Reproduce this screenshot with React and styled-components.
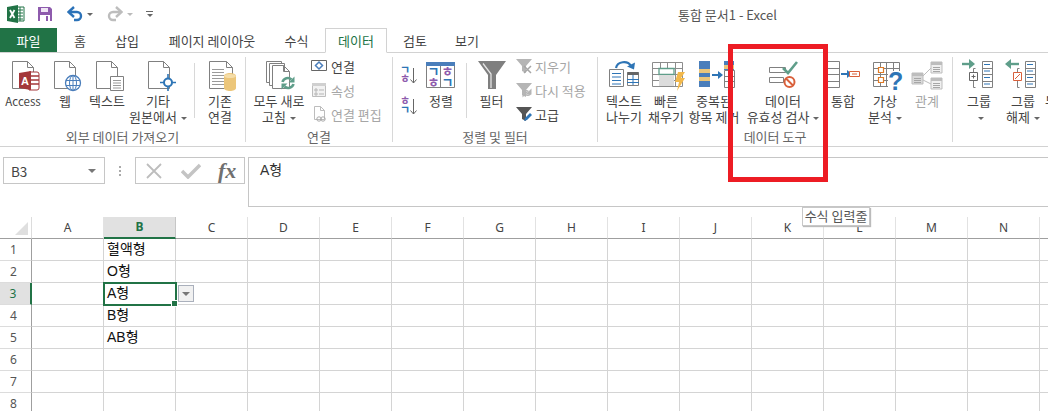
import styled, { createGlobalStyle } from "styled-components";

const GlobalStyle = createGlobalStyle`
    html, body {
        margin: 0;
        padding: 0;
        background: #fff;
        overflow: hidden;
    }
    body {
        font-family: "Noto Sans CJK KR", "Noto Sans", sans-serif;
    }
`;

const Page = styled.div`
    position: relative;
    width: 1048px;
    height: 411px;
    overflow: hidden;
    background: #fff;
    color: #444;
`;

/* title row */
const TitleBar = styled.div`
    height: 28px;
    display: flex;
    align-items: center;
`;
const QuickAccess = styled.div`
    width: 678px;
    display: flex;
    align-items: center;
    padding-left: 7px;
    box-sizing: border-box;
`;
const QuickGap = styled.span`
    width: ${(p) => p.$w}px;
`;
const Title = styled.div`
    font-size: 13px;
    color: #555;
    white-space: nowrap;
`;

/* tabs */
const TabRow = styled.div`
    height: 25px;
    display: flex;
    border-bottom: 1px solid #d2d2d2;
    box-sizing: border-box;
`;
const FileTab = styled.div`
    width: 57px;
    background: #217346;
    color: #fff;
    font-size: 13px;
    display: flex;
    align-items: center;
    justify-content: center;
`;
const Tab = styled.div`
    width: ${(p) => p.$w}px;
    margin-left: ${(p) => p.$ml || 0}px;
    font-size: 13px;
    display: flex;
    align-items: center;
    justify-content: center;
    box-sizing: border-box;
    white-space: nowrap;
    color: ${(p) => (p.$active ? "#217346" : "#444")};
    ${(p) =>
        p.$active &&
        `border: 1px solid #d2d2d2; border-bottom: 1px solid #fff; height: 25px; background: #fff;`}
`;

/* ribbon */
const Ribbon = styled.div`
    height: 94px;
    display: flex;
    border-bottom: 1px solid #d2d2d2;
    box-sizing: border-box;
    overflow: hidden;
`;
const Group = styled.div`
    width: ${(p) => p.$w}px;
    flex-shrink: 0;
    height: 85px;
    margin-top: 4px;
    display: flex;
    flex-direction: column;
    box-sizing: border-box;
    border-right: ${(p) => (p.$last ? "none" : "1px solid #d8d8d8")};
`;
const GroupBody = styled.div`
    height: 72px;
    flex-shrink: 0;
    display: flex;
    padding-left: ${(p) => p.$pl || 0}px;
`;
const GroupLabel = styled.div`
    height: 16px;
    flex-shrink: 0;
    font-size: 13px;
    line-height: 16px;
    color: #666;
    text-align: center;
    white-space: nowrap;
`;
const BigButton = styled.div`
    width: ${(p) => p.$w}px;
    flex-shrink: 0;
    display: flex;
    flex-direction: column;
    align-items: center;
    padding-top: 2px;
    font-size: 13px;
    line-height: 16px;
    white-space: nowrap;
    color: ${(p) => (p.$off ? "#a6a6a6" : "#444")};
`;
const BigIcon = styled.svg`
    width: 40px;
    height: 32px;
    margin-bottom: 2px;
    flex-shrink: 0;
    overflow: visible;
`;
const LatinLabel = styled.span`
    font-size: 11.5px;
`;
const Caret = styled.span`
    display: inline-block;
    width: 0;
    height: 0;
    margin-left: 4px;
    vertical-align: middle;
    border-left: 3px solid transparent;
    border-right: 3px solid transparent;
    border-top: 3px solid ${(p) => p.$color || "#666"};
`;
const CustomizeMark = styled.div`
    width: 7px;
    display: flex;
    flex-direction: column;
    align-items: center;
    padding-top: 2px;
    border-top: 1px solid #666;
`;
const Divider = styled.div`
    width: 1px;
    height: 55px;
    margin: 6px ${(p) => p.$mr || 0}px 0 ${(p) => p.$ml || 0}px;
    background: #d8d8d8;
    flex-shrink: 0;
`;
const SmallColumn = styled.div`
    display: flex;
    flex-direction: column;
    width: ${(p) => p.$w}px;
    flex-shrink: 0;
    margin-top: -3px;
    margin-left: ${(p) => p.$ml || 0}px;
`;
const SmallButton = styled.div`
    height: 24px;
    display: flex;
    align-items: center;
    gap: ${(p) => p.$gap ?? 4}px;
    font-size: 13px;
    white-space: nowrap;
    color: ${(p) => (p.$off ? "#a6a6a6" : "#444")};
`;
const SortColumn = styled.div`
    width: ${(p) => p.$w}px;
    flex-shrink: 0;
    display: flex;
    flex-direction: column;
    gap: 13px;
    padding: 9px 0 0 8px;
    box-sizing: border-box;
`;
const SortIcon = styled.svg`
    width: 16px;
    height: 18px;
    overflow: visible;
    flex-shrink: 0;
`;

/* formula bar */
const FormulaBar = styled.div`
    height: 50px;
    margin-top: 10px;
    display: flex;
    align-items: flex-start;
`;
const NameBox = styled.div`
    width: 102px;
    height: 27px;
    margin-left: 3px;
    border: 1px solid #c6c6c6;
    box-sizing: border-box;
    display: flex;
    align-items: center;
    justify-content: space-between;
    padding: 0 8px 0 7px;
    font-size: 13.5px;
    color: #444;
`;
const NameArrow = styled(Caret)`
    border-left-width: 4px;
    border-right-width: 4px;
    border-top-width: 4px;
    border-top-color: #777;
`;
const Grip = styled.div`
    width: 2px;
    height: 10px;
    margin: 9px 14px 0 14px;
    background: repeating-linear-gradient(#aaa 0 2px, transparent 2px 4px);
`;
const FormulaButtons = styled.div`
    width: 110px;
    height: 27px;
    border: 1px solid #c6c6c6;
    box-sizing: border-box;
    display: flex;
    align-items: center;
    padding-left: 9px;
    gap: 18px;
`;
const FormulaInput = styled.div`
    flex: 1;
    height: 50px;
    margin-left: 3px;
    margin-right: -2px;
    border: 1px solid #c6c6c6;
    box-sizing: border-box;
    padding: 1px 0 0 11px;
    font-family: "Liberation Sans", "Noto Sans CJK KR", sans-serif;
    font-size: 14px;
    line-height: 22px;
    color: #333;
`;
const FxText = styled.span`
    font-family: "Liberation Serif", serif;
    font-style: italic;
    font-weight: bold;
    font-size: 22px;
    line-height: 25px;
    color: #707070;
    margin-left: -1px;
`;

/* sheet */
const Sheet = styled.div`
    margin-top: 10px;
    display: grid;
    grid-template-columns: 32px repeat(15, 72px);
    grid-template-rows: 22px repeat(8, 22px);
`;
const Corner = styled.div`
    position: relative;
    border-right: 1px solid #dcdcdc;
    border-bottom: 1px solid #9f9f9f;
    box-sizing: border-box;
    &::after {
        content: "";
        position: absolute;
        left: 15px;
        bottom: 3px;
        width: 0;
        height: 0;
        border-left: 13px solid transparent;
        border-bottom: 13px solid #dfdfdf;
    }
`;
const ColHeader = styled.div`
    box-sizing: border-box;
    display: flex;
    align-items: center;
    justify-content: center;
    padding-bottom: 1px;
    font-family: "Noto Sans", sans-serif;
    font-size: 12px;
    color: ${(p) => (p.$on ? "#217346" : "#444")};
    font-weight: ${(p) => (p.$on ? 700 : 400)};
    background: ${(p) => (p.$on ? "#e1e1e1" : "#fff")};
    border-right: 1px solid ${(p) => (p.$on ? "#c6c6c6" : "#e2e2e2")};
    border-bottom: ${(p) => (p.$on ? "2px solid #217346" : "1px solid #9f9f9f")};
`;
const RowHeader = styled.div`
    box-sizing: border-box;
    display: flex;
    align-items: center;
    justify-content: center;
    padding-right: 4px;
    font-family: "Noto Sans", sans-serif;
    font-size: 12px;
    color: ${(p) => (p.$on ? "#217346" : "#555")};
    background: ${(p) => (p.$on ? "#e1e1e1" : "#fff")};
    border-right: ${(p) => (p.$on ? "2px solid #217346" : "1px solid #9f9f9f")};
    border-bottom: 1px solid #dcdcdc;
`;
const Cell = styled.div`
    position: relative;
    box-sizing: border-box;
    border-right: 1px solid #d4d4d4;
    border-bottom: 1px solid #d4d4d4;
    padding-left: 3px;
    font-family: "Liberation Sans", "Noto Sans CJK KR", sans-serif;
    font-size: 14px;
    line-height: 21px;
    color: #111;
    white-space: nowrap;
    ${(p) =>
        p.$selected &&
        `outline: 2px solid #217346; outline-offset: -1px; z-index: 2;`}
`;
const FillHandle = styled.div`
    position: absolute;
    right: -3px;
    bottom: -3px;
    width: 5px;
    height: 5px;
    background: #217346;
    border: 1px solid #fff;
`;
const ListButton = styled.div`
    position: absolute;
    left: 74px;
    top: 2px;
    width: 16px;
    height: 17px;
    box-sizing: border-box;
    background: #f1f1f1;
    border: 1px solid #aab0bc;
    display: flex;
    align-items: center;
    justify-content: center;
`;

/* overlays */
const Highlight = styled.div`
    position: absolute;
    left: 728px;
    top: 44px;
    width: 100px;
    height: 138px;
    box-sizing: border-box;
    border: 5px solid #ed1c24;
    pointer-events: none;
`;
const Tooltip = styled.div`
    position: absolute;
    left: 802px;
    top: 207px;
    width: 68px;
    height: 19px;
    box-sizing: border-box;
    background: #fff;
    border: 1px solid #c8c8c8;
    box-shadow: 1px 1px 1px #bbb;
    font-size: 13px;
    line-height: 16px;
    text-align: center;
    color: #555;
    white-space: nowrap;
    z-index: 5;
`;

const G = "#808080";
const BLUE = "#4a7ebb";
const TEAL = "#5f9e8a";

const pagePath = (x, y, w, h, f = 6) =>
    `M${x} ${y}H${x + w - f}L${x + w} ${y + f}V${y + h}H${x}ZM${x + w - f} ${y}V${y + f}H${x + w}`;

const Page1 = ({ x = 9, y = 2, w = 21, h = 27 }) => (
    <path d={pagePath(x + 0.5, y + 0.5, w, h)} fill="#fff" stroke={G} />
);

const Lines = ({ x, y, w, n, gap = 3, color = "#9a9a9a" }) => (
    <path
        d={Array.from({ length: n }, (_, i) => `M${x} ${y + i * gap + 0.5}h${w}`).join("")}
        stroke={color}
        fill="none"
    />
);

const TableGrid = ({ x, y, w, h, cols, rows, color = G }) => {
    let d = `M${x + 0.5} ${y + 0.5}h${w}v${h}h${-w}z`;
    for (let i = 1; i < cols; i++) d += `M${x + 0.5 + Math.round((w * i) / cols)} ${y}v${h}`;
    for (let i = 1; i < rows; i++) d += `M${x} ${y + 0.5 + Math.round((h * i) / rows)}h${w}`;
    return <path d={d} fill="none" stroke={color} />;
};

const Refresh = ({ cx, cy, r = 6, color = TEAL, sw = 2.6 }) => (
    <g fill="none" stroke={color} strokeWidth={sw}>
        <path d={`M${cx - r} ${cy - 1}A${r} ${r} 0 0 1 ${cx + r - 2} ${cy - r + 2}`} />
        <path d={`M${cx + r} ${cy + 1}A${r} ${r} 0 0 1 ${cx - r + 2} ${cy + r - 2}`} />
        <path d={`M${cx + r + 1} ${cy - r - 1}v6h-6z`} fill={color} stroke="none" />
        <path d={`M${cx - r - 1} ${cy + r + 1}v-6h6z`} fill={color} stroke="none" />
    </g>
);

const Funnel = ({ color, x = 0 }) => (
    <path d={`M${x} 1H${x + 16}L${x + 10} 8V15L${x + 6} 13V8Z`} fill={color} />
);

const SmallSvg = styled.svg`
    width: ${(p) => p.$w || 16}px;
    height: ${(p) => p.$h || 16}px;
    flex-shrink: 0;
`;

const ExcelLogo = () => (
    <SmallSvg $w={18} $h={18} viewBox="0 0 18 18">
        <path d="M9 2h8v14H9z" fill="#fff" stroke="#217346" />
        <path d="M10 5h6M10 8h6M10 11h6M10 14h6M13 2v14" stroke="#217346" />
        <path d="M0 2L11 0V18L0 16Z" fill="#217346" />
        <path d="M3 5l4.500 8M7.500 5L3 13" stroke="#fff" strokeWidth="1.800" />
    </SmallSvg>
);
const SaveIcon = () => (
    <SmallSvg viewBox="0 0 16 16">
        <path d="M1 1h12l2 2v12H1z" fill="#8e5bad" />
        <path d="M4 2h7v4H4z" fill="#efe6f4" />
        <path d="M3 9h10v6H3z" fill="#fff" />
        <path d="M9 10h2v5H9z" fill="#8e5bad" />
    </SmallSvg>
);
const UndoArrow = ({ color, flip }) => (
    <SmallSvg viewBox="0 0 16 16" style={flip ? { transform: "scaleX(-1)" } : undefined}>
        <path d="M3 6h7a4 4 0 0 1 0 8H7" fill="none" stroke={color} strokeWidth="2.400" />
        <path d="M7 1L1.500 6 7 11" fill="none" stroke={color} strokeWidth="2.400" />
    </SmallSvg>
);

const Icons = {
    access: (
        <>
            <Page1 />
            <path d="M26 13h8a2 2 0 0 1 2 2v14a2 2 0 0 1-2 2h-8z" fill="#fff" stroke="#a4373a" />
            <path d="M27 17h9M27 21h9M27 25h9" stroke="#a4373a" strokeWidth="1.500" />
            <path d="M16 14l12-2v19l-12-2z" fill="#a4373a" />
            <text x="18" y="26" fontSize="11" fontWeight="700" fill="#fff" fontFamily="Liberation Sans">A</text>
        </>
    ),
    web: (
        <>
            <Page1 />
            <circle cx="28" cy="24" r="7.500" fill="#fff" stroke={BLUE} strokeWidth="1.300" />
            <ellipse cx="28" cy="24" rx="3.500" ry="7.500" fill="none" stroke={BLUE} />
            <path d="M21 21.500h14M21 26.500h14M28 16.500v15" stroke={BLUE} />
        </>
    ),
    text: (
        <>
            <Page1 />
            <path d="M23.500 17.500h13v14h-13z" fill="#fff" stroke={G} />
            <Lines x={26} y={21} w={8} n={4} gap={2.500} />
        </>
    ),
    other: (
        <>
            <Page1 x={10} />
            <path d="M22 23.500h16M30 15v17" stroke="#2e75b6" strokeWidth="1.600" />
            <circle cx="30" cy="23.500" r="4" fill="#fff" stroke="#2e75b6" strokeWidth="2" />
        </>
    ),
    existing: (
        <>
            <Page1 w={23} />
            <Lines x={12} y={10} w={12} n={6} gap={3} />
            <path d="M24 17c0-4 12-4 12 0v12c0 4-12 4-12 0z" fill="#ecc67a" />
            <ellipse cx="30" cy="17" rx="6" ry="2" fill="#f5dda8" />
        </>
    ),
    refreshAll: (
        <>
            <path d="M7.500 2.500h15v21h-15z" fill="#fff" stroke={G} />
            <path d="M10.500 4.500h15v22h-15z" fill="#fff" stroke={G} />
            <path d={pagePath(13.5, 6.5, 17, 23)} fill="#fff" stroke={G} />
            <Refresh cx={29} cy={24} r={5.500} />
        </>
    ),
    sort: (
        <>
            <path d="M5.500 3.500h28v25h-28z" fill="#fff" stroke={G} />
            <path d="M5 3h29v4H5z" fill="#4a7ebb" />
            <path d="M19.500 7v21" stroke={G} />
            <text x="6.500" y="17" fontSize="13" fontWeight="700" fill="#2e75b6">ㄱ</text>
            <text x="6.500" y="28" fontSize="13" fontWeight="700" fill="#8e5bad">ㅎ</text>
            <text x="20.500" y="17" fontSize="13" fontWeight="700" fill="#8e5bad">ㅎ</text>
            <text x="20.500" y="28" fontSize="13" fontWeight="700" fill="#2e75b6">ㄱ</text>
        </>
    ),
    filter: (
        <>
            <path d="M6 2H34L24 16V30H16V16Z" fill="#7f7f7f" />
            <path d="M11 4.500L19 15V29" fill="none" stroke="#e4e4e4" strokeWidth="1.300" />
        </>
    ),
    split: (
        <>
            <path d="M5.500 10.500h14v17h-14z" fill="#fff" stroke={G} />
            <Lines x={8} y={14} w={9} n={4} gap={3.500} color="#2e75b6" />
            <path d="M23.500 13.500h11v13h-11z" fill="#fff" stroke={G} />
            <path d="M23.500 13h11v3h-11z" fill="#666" />
            <path d="M23 20.500h12M23 23.500h12M29 16v10" stroke="#2e75b6" />
            <path d="M12 9a8 7 0 0 1 15-2" fill="none" stroke="#2e75b6" strokeWidth="2.200" />
            <path d="M23 7.500l7 3 1-7z" fill="#2e75b6" />
        </>
    ),
    flash: (
        <>
            <TableGrid x={6} y={3} w={30} h={24} cols={4} rows={4} color="#8c8c8c" />
            <path d="M13 9.500h15v6h-15z" fill="#fff" stroke="#5f9e8a" strokeWidth="1.300" />
            <path d="M13 16h15v11H13z" fill="#dcdcdc" />
            <path d="M32 13h7l-4 6h4l-8 13 2-9h-4z" fill="#f2b84b" />
        </>
    ),
    dedupe: (
        <>
            <path d="M5 2h11v26H5z" fill="#4a7ebb" />
            <path d="M5 10h11v4H5zM5 18h11v4H5z" fill="#ecc67a" />
            <path d="M18 16h7" stroke="#2e75b6" strokeWidth="2" />
            <path d="M24 12l5 4-5 4z" fill="#2e75b6" />
            <path d="M30 2h10v9H30z" fill="#4a7ebb" />
            <path d="M30 6h10v4H30z" fill="#ecc67a" />
            <TableGrid x={30} y={11} w={10} h={17} cols={1} rows={3} />
        </>
    ),
    validate: (
        <>
            <path d="M6.500 8.500h16v5h-16zM6.500 18.500h14v5h-14z" fill="#fff" stroke={G} />
            <path d="M20 9l5 5 9-11" fill="none" stroke={TEAL} strokeWidth="2.600" />
            <circle cx="26.500" cy="23" r="5" fill="#fff" stroke="#d9603b" strokeWidth="2" />
            <path d="M23 19.500l7 7" stroke="#d9603b" strokeWidth="2" />
        </>
    ),
    merge: (
        <>
            <TableGrid x={0} y={2} w={16} h={26} cols={1} rows={4} />
            <path d="M18 15h7" stroke="#2e75b6" strokeWidth="2" />
            <path d="M24 11l5 4-5 4z" fill="#2e75b6" />
            <path d="M26.500 12.500h10v5h-10z" fill="#fff" stroke="#d9603b" />
            <path d="M29 15h5" stroke="#d9603b" />
        </>
    ),
    whatif: (
        <>
            <TableGrid x={8} y={3} w={26} h={24} cols={4} rows={4} />
            <path d="M13.500 8.500h5v5h-5zM13.500 18.500h5v5h-5z" fill="#fff" stroke="#e07b26" strokeWidth="1.200" />
            <path d="M23 12h13v19H23z" fill="#fff" />
            <text x="23" y="31" fontSize="25" fontWeight="700" fill="#2e75b6" fontFamily="Liberation Sans">?</text>
        </>
    ),
    relation: (
        <>
            <path d="M5 14h11v11H5z" fill="#d9d9d9" stroke="#bdbdbd" />
            <path d="M24 3h11v11H24zM24 19h11v11H24z" fill="#f0f0f0" stroke="#bdbdbd" />
            <path d="M5 14h11v3H5zM24 3h11v3H24zM24 19h11v3H24z" fill="#bdbdbd" />
            <path d="M16 17L24 9M16 21L24 25" stroke="#bdbdbd" fill="none" />
            <Lines x={7} y={19} w={7} n={3} gap={2} color="#a6a6a6" />
            <Lines x={26} y={8} w={7} n={3} gap={2} color="#a6a6a6" />
            <Lines x={26} y={24} w={7} n={3} gap={2} color="#a6a6a6" />
        </>
    ),
    group: (
        <>
            <path d="M3 5h9" stroke={TEAL} strokeWidth="2.400" />
            <path d="M10 0l6 5-6 5z" fill={TEAL} />
            <path d="M16.500 9.500h-2v19h2" fill="none" stroke={G} />
            <path d="M10.500 13.500h8v8h-8z" fill="#fff" stroke="#666" />
            <path d="M12.500 17.500h4M14.500 15.500v4" stroke="#666" />
            <TableGrid x={23} y={2} w={10} h={26} cols={1} rows={4} />
            <Lines x={25} y={5} w={6} n={4} gap={6.500} color="#2e75b6" />
        </>
    ),
    ungroup: (
        <>
            <path d="M7 5h9" stroke={TEAL} strokeWidth="2.400" />
            <path d="M8 0L2 5l6 5z" fill={TEAL} />
            <path d="M16.500 9.500h-2v19h2" fill="none" stroke={G} />
            <path d="M10.500 13.500h8v8h-8z" fill="#fff" stroke="#d9603b" />
            <path d="M12 20l5-5" stroke="#d9603b" />
            <TableGrid x={22} y={2} w={10} h={26} cols={1} rows={4} />
            <Lines x={24} y={5} w={6} n={4} gap={6.500} color="#2e75b6" />
        </>
    ),
};

const Big = ({ w, icon, lines, off, caret }) => (
    <BigButton $w={w} $off={off}>
        <BigIcon viewBox="0 0 40 32">{Icons[icon]}</BigIcon>
        {lines.map((line, i) => (
            <div key={i}>
                {line}
                {caret && i === lines.length - 1 && <Caret />}
            </div>
        ))}
    </BigButton>
);

const SortGlyphs = ({ top, bottom, topColor, bottomColor }) => (
    <SortIcon viewBox="0 0 16 18">
        <text x="-1" y="8" fontSize="11" fontWeight="700" fill={topColor}>{top}</text>
        <text x="-1" y="17" fontSize="11" fontWeight="700" fill={bottomColor}>{bottom}</text>
        <path d="M12.500 2v15M9.500 13.500l3 3.500 3-3.500" fill="none" stroke="#666" />
    </SortIcon>
);

const tabs = [
    ["홈", 46],
    ["삽입", 48],
    ["페이지 레이아웃", 122],
    ["수식", 47],
];

const columns = "ABCDEFGHIJKLMNO".split("");
const cellText = { 1: "혈액형", 2: "O형", 3: "A형", 4: "B형", 5: "AB형" };

const Row = ({ row }) => (
    <>
        <RowHeader $on={row === 3}>{row}</RowHeader>
        {columns.map((c) => {
            const isB = c === "B";
            const selected = isB && row === 3;
            return (
                <Cell key={c} $selected={selected}>
                    {isB && cellText[row]}
                    {selected && (
                        <>
                            <FillHandle />
                            <ListButton>
                                <NameArrow style={{ margin: 0 }} />
                            </ListButton>
                        </>
                    )}
                </Cell>
            );
        })}
    </>
);

const App = () => {
    return (
        <Page>
            <GlobalStyle />
            <TitleBar>
                <QuickAccess>
                    <ExcelLogo />
                    <QuickGap $w={12} />
                    <SaveIcon />
                    <QuickGap $w={14} />
                    <UndoArrow color="#2b72b8" />
                    <Caret />
                    <QuickGap $w={14} />
                    <UndoArrow color="#bdbdbd" flip />
                    <Caret $color="#bbb" />
                    <QuickGap $w={13} />
                    <CustomizeMark>
                        <Caret style={{ margin: 0 }} />
                    </CustomizeMark>
                </QuickAccess>
                <Title>통합 문서1 - Excel</Title>
            </TitleBar>

            <TabRow>
                <FileTab>파일</FileTab>
                {tabs.map(([name, w]) => (
                    <Tab key={name} $w={w}>{name}</Tab>
                ))}
                <Tab $w={62} $ml={5} $active>데이터</Tab>
                <Tab $w={56}>검토</Tab>
                <Tab $w={48}>보기</Tab>
            </TabRow>

            <Ribbon>
                <Group $w={246}>
                    <GroupBody>
                        <Big w={46} icon="access" lines={[<LatinLabel key="a">Access</LatinLabel>]} />
                        <Big w={38} icon="web" lines={["웹"]} />
                        <Big w={46} icon="text" lines={["텍스트"]} />
                        <Big w={56} icon="other" lines={["기타", "원본에서"]} caret />
                        <Divider $ml={8} />
                        <Big w={50} icon="existing" lines={["기존", "연결"]} />
                    </GroupBody>
                    <GroupLabel>외부 데이터 가져오기</GroupLabel>
                </Group>

                <Group $w={147}>
                    <GroupBody>
                        <Big w={66} icon="refreshAll" lines={["모두 새로", "고침"]} caret />
                        <SmallColumn $w={80} $ml={-1}>
                            <SmallButton>
                                <SmallSvg viewBox="0 0 16 16">
                                    <path d="M0.500 2.500h15v10h-15z" fill="#fff" stroke="#666" />
                                    <path d="M8 4l3.500 3.500L8 11 4.500 7.500z" fill="none" stroke={BLUE} strokeWidth="1.500" />
                                </SmallSvg>
                                연결
                            </SmallButton>
                            <SmallButton $off>
                                <SmallSvg viewBox="0 0 16 16">
                                    <path d="M1.500 1.500h13v13h-13z" fill="#f2f2f2" stroke="#bdbdbd" />
                                    <path d="M1 1h14v3H1z" fill="#d0d0d0" />
                                    <path d="M4 7h2v2H4zM4 11h2v2H4zM8 8h5M8 12h5" stroke="#b5b5b5" fill="none" />
                                </SmallSvg>
                                속성
                            </SmallButton>
                            <SmallButton $off>
                                <SmallSvg viewBox="0 0 16 16">
                                    <path d={pagePath(3.5, 0.5, 10, 13, 4)} fill="#fff" stroke="#bdbdbd" />
                                    <circle cx="8" cy="13" r="2.200" fill="none" stroke="#aaa" />
                                    <circle cx="12" cy="13" r="2.200" fill="none" stroke="#aaa" />
                                </SmallSvg>
                                연결 편집
                            </SmallButton>
                        </SmallColumn>
                    </GroupBody>
                    <GroupLabel>연결</GroupLabel>
                </Group>

                <Group $w={205}>
                    <GroupBody>
                        <SortColumn $w={32}>
                            <SortGlyphs top="ㄱ" bottom="ㅎ" topColor="#2e75b6" bottomColor="#8e5bad" />
                            <SortGlyphs top="ㅎ" bottom="ㄱ" topColor="#8e5bad" bottomColor="#2e75b6" />
                        </SortColumn>
                        <Big w={32} icon="sort" lines={["정렬"]} />
                        <Divider $ml={9} />
                        <Big w={49} icon="filter" lines={["필터"]} />
                        <SmallColumn $w={82}>
                            <SmallButton $off $gap={3}>
                                <SmallSvg viewBox="0 0 16 16">
                                    <Funnel color="#b5b5b5" />
                                    <path d="M8 8l7 7M15 8l-7 7" stroke="#a6a6a6" strokeWidth="1.500" />
                                </SmallSvg>
                                지우기
                            </SmallButton>
                            <SmallButton $off $gap={3}>
                                <SmallSvg viewBox="0 0 16 16">
                                    <Funnel color="#b5b5b5" />
                                    <Refresh cx={11} cy={11} r={3.500} color="#b5b5b5" sw={1.400} />
                                </SmallSvg>
                                다시 적용
                            </SmallButton>
                            <SmallButton $gap={3}>
                                <SmallSvg viewBox="0 0 16 16">
                                    <Funnel color="#555" />
                                    <path d="M8 15l1-3 5-5 2 2-5 5z" fill="#2e75b6" />
                                </SmallSvg>
                                고급
                            </SmallButton>
                        </SmallColumn>
                    </GroupBody>
                    <GroupLabel>정렬 및 필터</GroupLabel>
                </Group>

                <Group $w={355}>
                    <GroupBody $pl={5}>
                        <Big w={42} icon="split" lines={["텍스트", "나누기"]} />
                        <Big w={42} icon="flash" lines={["빠른", "채우기"]} />
                        <Big w={54} icon="dedupe" lines={["중복된", "항목 제거"]} />
                        <Big w={84} icon="validate" lines={["데이터", "유효성 검사"]} caret />
                        <Big w={36} icon="merge" lines={["통합"]} />
                        <Big w={48} icon="whatif" lines={["가상", "분석"]} caret />
                        <Big w={36} icon="relation" lines={["관계"]} off />
                    </GroupBody>
                    <GroupLabel>데이터 도구</GroupLabel>
                </Group>

                <Group $w={100} $last>
                    <GroupBody $pl={4}>
                        <Big w={44} icon="group" lines={["그룹", ""]} caret />
                        <Big w={44} icon="ungroup" lines={["그룹", "해제"]} caret />
                        <Big w={36} lines={["부분합"]} />
                    </GroupBody>
                </Group>
            </Ribbon>

            <FormulaBar>
                <NameBox>
                    B3
                    <NameArrow />
                </NameBox>
                <Grip />
                <FormulaButtons>
                    <SmallSvg $w={18} viewBox="0 0 18 16">
                        <path d="M2 1l14 14M16 1L2 15" stroke="#bdbdbd" strokeWidth="1.800" />
                    </SmallSvg>
                    <SmallSvg $w={20} viewBox="0 0 20 16">
                        <path d="M1 8l6 6L19 2" fill="none" stroke="#c4c4c4" strokeWidth="3.500" />
                    </SmallSvg>
                    <FxText>fx</FxText>
                </FormulaButtons>
                <FormulaInput>A형</FormulaInput>
            </FormulaBar>

            <Sheet>
                <Corner />
                {columns.map((c) => (
                    <ColHeader key={c} $on={c === "B"}>{c}</ColHeader>
                ))}
                {[1, 2, 3, 4, 5, 6, 7, 8].map((row) => (
                    <Row key={row} row={row} />
                ))}
            </Sheet>

            <Highlight />
            <Tooltip>수식 입력줄</Tooltip>
        </Page>
    );
};

export default App;
